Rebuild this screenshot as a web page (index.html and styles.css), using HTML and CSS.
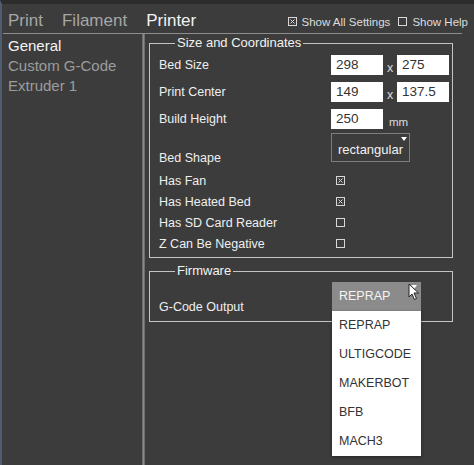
FILE: index.html
```html
<!DOCTYPE html>
<html>
<head>
<meta charset="utf-8">
<link rel="stylesheet" href="styles.css">
</head>
<body>
<div class="app">
  <header class="topbar">
    <nav class="tabs">
      <span class="tab">Print</span>
      <span class="tab">Filament</span>
      <span class="tab active">Printer</span>
    </nav>
    <div class="opts">
      <span class="opt"><svg class="cb" viewBox="0 0 9 9"><rect x="0.5" y="0.5" width="8" height="8"/><path d="M2.5 2.5L6.5 6.5M6.5 2.5L2.5 6.5"/></svg>Show All Settings</span>
      <span class="opt"><svg class="cb" viewBox="0 0 9 9"><rect x="0.5" y="0.5" width="8" height="8"/></svg>Show Help</span>
    </div>
  </header>
  <div class="rule"></div>
  <div class="main">
    <aside class="side">
      <div class="side-item active">General</div>
      <div class="side-item">Custom G-Code</div>
      <div class="side-item">Extruder 1</div>
    </aside>
    <div class="divider"></div>
    <section class="content">
      <fieldset class="group">
        <legend>Size and Coordinates</legend>
        <div class="row">
          <span class="label">Bed Size</span>
          <span class="field">298</span><span class="sep">x</span><span class="field">275</span>
        </div>
        <div class="row">
          <span class="label">Print Center</span>
          <span class="field">149</span><span class="sep">x</span><span class="field">137.5</span>
        </div>
        <div class="row">
          <span class="label">Build Height</span>
          <span class="field">250</span><span class="unit">mm</span>
        </div>
        <div class="row row-select">
          <span class="label">Bed Shape</span>
          <span class="select">rectangular<i class="tri"></i></span>
        </div>
        <div class="row row-check">
          <span class="label">Has Fan</span>
          <svg class="cb cb-field" viewBox="0 0 9 9"><rect x="0.5" y="0.5" width="8" height="8"/><path d="M2.5 2.5L6.5 6.5M6.5 2.5L2.5 6.5"/></svg>
        </div>
        <div class="row row-check">
          <span class="label">Has Heated Bed</span>
          <svg class="cb cb-field" viewBox="0 0 9 9"><rect x="0.5" y="0.5" width="8" height="8"/><path d="M2.5 2.5L6.5 6.5M6.5 2.5L2.5 6.5"/></svg>
        </div>
        <div class="row row-check">
          <span class="label">Has SD Card Reader</span>
          <svg class="cb cb-field" viewBox="0 0 9 9"><rect x="0.5" y="0.5" width="8" height="8"/></svg>
        </div>
        <div class="row row-check">
          <span class="label">Z Can Be Negative</span>
          <svg class="cb cb-field" viewBox="0 0 9 9"><rect x="0.5" y="0.5" width="8" height="8"/></svg>
        </div>
      </fieldset>
      <fieldset class="group group-fw">
        <legend>Firmware</legend>
        <div class="row row-select fw">
          <span class="label">G-Code Output</span>
          <div class="dropdown">
            <div class="dd-head">REPRAP<i class="tri"></i>
              <svg class="cursor" viewBox="0 0 12 18"><path d="M1 1 L1 14 L4 11 L6.5 16.5 L8.5 15.5 L6 10 L10.5 10 Z" fill="#fff" stroke="#222" stroke-width="1" stroke-linejoin="round"/></svg>
            </div>
            <ul class="dd-list">
              <li>REPRAP</li>
              <li>ULTIGCODE</li>
              <li>MAKERBOT</li>
              <li>BFB</li>
              <li>MACH3</li>
            </ul>
          </div>
        </div>
      </fieldset>
    </section>
  </div>
</div>
</body>
</html>
```
FILE: styles.css
```css
* { box-sizing: border-box; }
html, body { margin: 0; padding: 0; }
body {
  background: #3c3c3c;
  font-family: "Liberation Sans", Arial, sans-serif;
  color: #eeeeee;
  width: 474px;
  height: 465px;
  overflow: hidden;
}
.app {
  height: 465px;
  border-top: 4px solid #2c2c2c;
  border-left: 2px solid #4f5d70;
  display: flex;
  flex-direction: column;
}
.topbar {
  height: 29px;
  display: flex;
  align-items: baseline;
  justify-content: space-between;
  padding: 7px 6px 0 6px;
}
.tabs { display: flex; gap: 19px; }
.tab {
  font-size: 17px;
  color: #a6a6a6;
  line-height: 20px;
}
.tab.active { color: #f2f2f2; }
.opts { display: flex; gap: 8px; font-size: 11.5px; color: #dddddd; }
.opt { display: flex; align-items: center; gap: 5px; }
.cb {
  width: 9px;
  height: 9px;
  fill: none;
  stroke: #d8d8d8;
  stroke-width: 1;
  flex: none;
}
.rule {
  height: 1px;
  background: #8e8e8e;
  margin: 0 12px 0 1px;
}
.main { flex: 1; display: flex; }
.side {
  width: 140px;
  padding: 2px 0 0 6px;
}
.side-item {
  font-size: 15px;
  line-height: 20px;
  color: #9c9c9c;
}
.side-item.active { color: #f4f4f4; }
.divider {
  width: 3px;
  border-left: 1px solid #6e6e6e;
  border-right: 1px solid #6e6e6e;
  background: #8a8a8a;
}
.content {
  flex: 1;
  padding: 1px 21px 0 4px;
}
.group {
  margin: 0;
  padding: 0 0 3px 9px;
  border: 1px solid #c4c4c4;
}
.group legend {
  margin-left: 16px;
  padding: 0 2px;
  font-size: 13px;
  line-height: 16px;
  color: #f2f2f2;
}
.group-fw { margin-top: 5px; padding-bottom: 4px; }
.row {
  display: flex;
  align-items: center;
  height: 27px;
  font-size: 12.5px;
}
.label { width: 172px; flex: none; color: #efefef; }
.field {
  width: 52px;
  height: 20px;
  background: #ffffff;
  color: #333333;
  font-size: 13.5px;
  line-height: 20px;
  padding-left: 5px;
}
.sep { width: 14px; text-align: center; color: #dddddd; padding-top: 6px; }
.unit { margin-left: 6px; color: #dddddd; font-size: 11.5px; padding-top: 6px; }
.row-select { height: 38px; align-items: flex-start; }
.row-select .label { padding-top: 19px; }
.select {
  position: relative;
  margin-top: 1px;
  width: 79px;
  height: 29px;
  border: 1px solid #7d7d7d;
  color: #f2f2f2;
  font-size: 13px;
  display: flex;
  align-items: center;
  justify-content: center;
  padding-top: 3px;
}
.tri {
  position: absolute;
  right: 2px;
  top: 3px;
  width: 0;
  height: 0;
  border-left: 3px solid transparent;
  border-right: 3px solid transparent;
  border-top: 4px solid #ffffff;
}
.row-check { height: 21px; }
.cb-field { margin-left: 5px; }
.fw { height: 38px; }
.fw .label { padding-top: 21px; }
.dropdown {
  position: relative;
  margin-top: 3px;
  margin-left: 1px;
  width: 89px;
}
.dd-head {
  position: relative;
  height: 29px;
  background: #8b8b8b;
  color: #f4f4f4;
  font-size: 12.5px;
  line-height: 29px;
  padding-left: 7px;
}
.dd-head .tri { right: 4px; top: 3px; }
.cursor {
  position: absolute;
  left: 76px;
  top: 1px;
  width: 12px;
  height: 18px;
}
.dd-list {
  position: absolute;
  top: 29px;
  left: 0;
  width: 89px;
  margin: 0;
  padding: 0;
  list-style: none;
  background: #ffffff;
  box-shadow: 0 1px 3px rgba(0,0,0,0.4);
  z-index: 2;
}
.dd-list li {
  height: 29px;
  line-height: 29px;
  padding-left: 7px;
  font-size: 12.5px;
  color: #333333;
}
```
